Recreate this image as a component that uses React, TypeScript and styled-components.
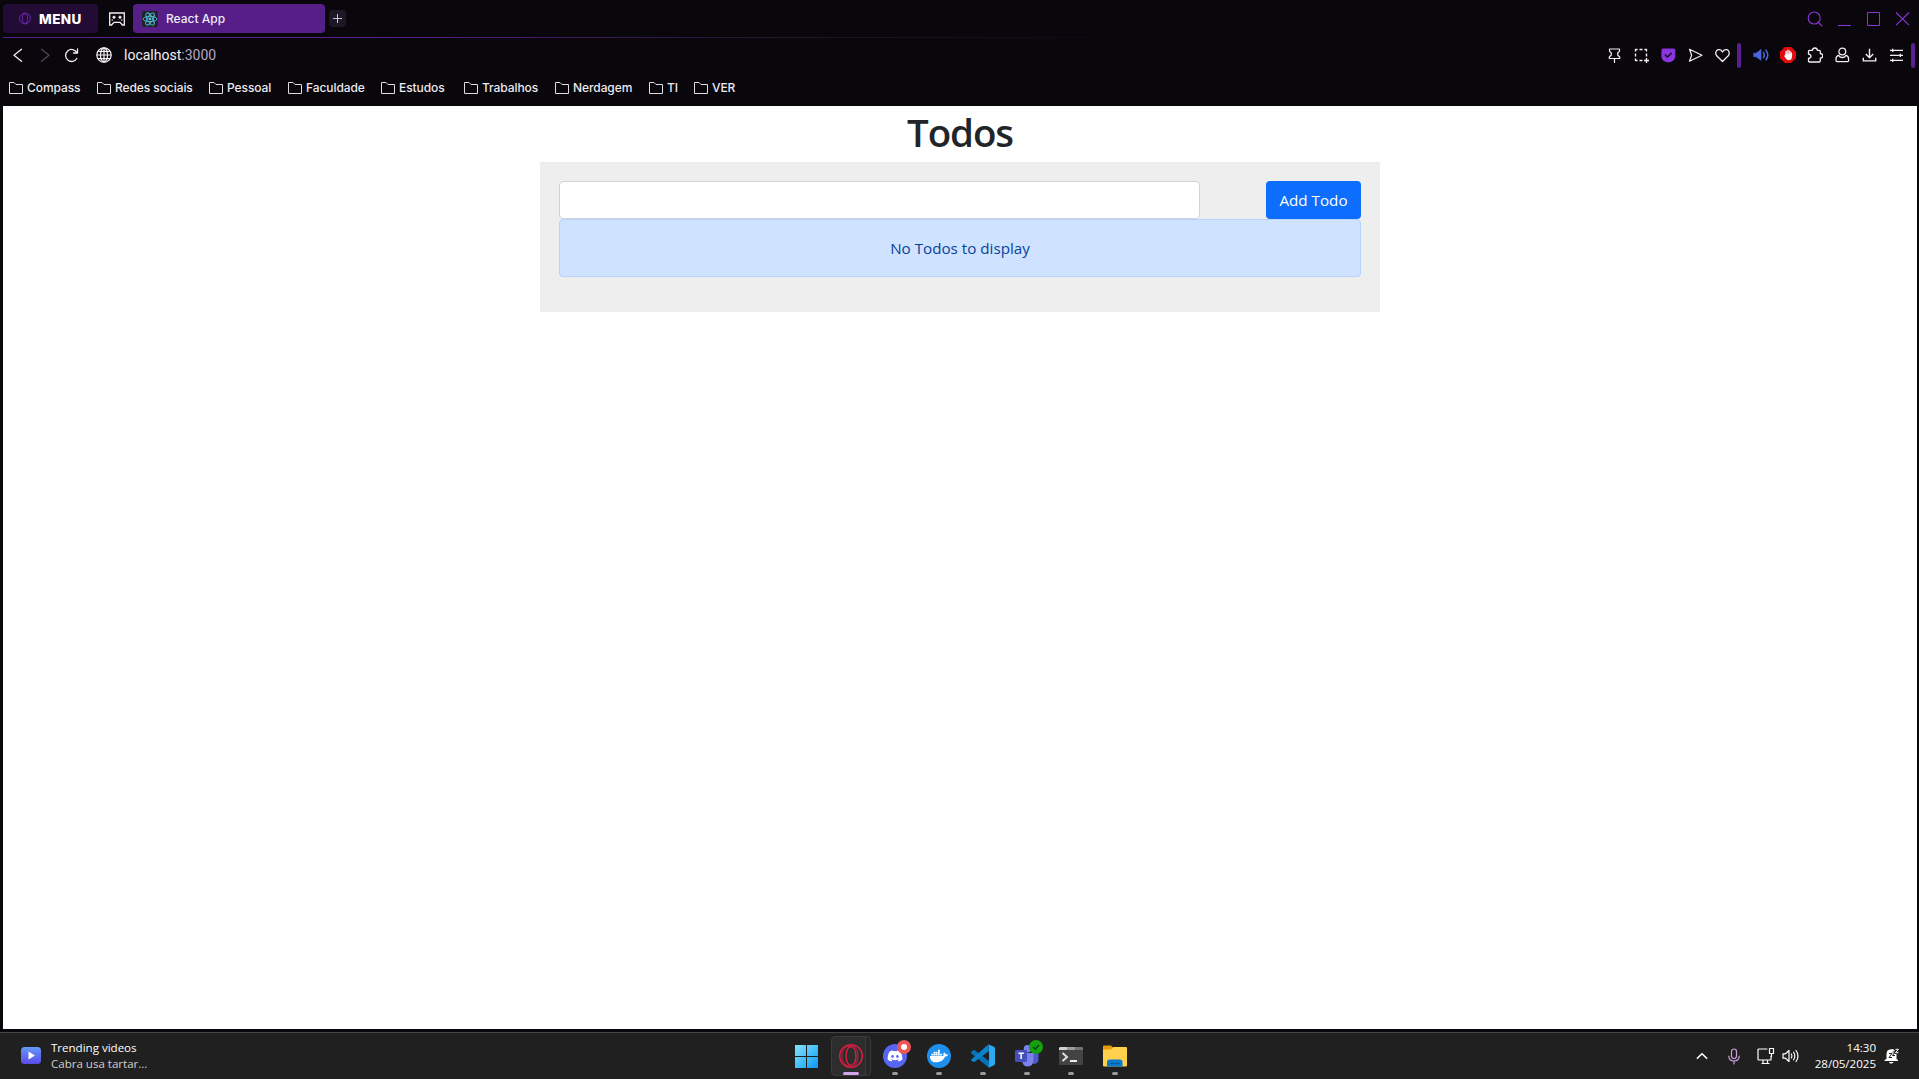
import React from "react";
import styled, { createGlobalStyle } from "styled-components";
import { FaDiscord, FaDocker } from "react-icons/fa";

const ui = `Inter, "Liberation Sans", sans-serif`;
const segoe = `"Open Sans", "Noto Sans", sans-serif`;

const Global = createGlobalStyle`
  * { box-sizing: border-box; }
  body { margin: 0; background: #09070c; overflow: hidden; }
  svg { display: block; flex: none; }
`;

const Screen = styled.div`
  display: flex;
  flex-direction: column;
  width: 1919px;
  height: 1079px;
  background: #09070c;
`;

/* ---------- browser chrome ---------- */
const TabBar = styled.header`
  display: flex;
  align-items: center;
  height: 37px;
  padding: 0 0 0 3px;
`;
const MenuButton = styled.button`
  display: flex;
  align-items: center;
  gap: 8px;
  width: 95px;
  height: 29px;
  padding: 0 0 0 16px;
  border: 0;
  border-radius: 4px;
  background: #220c36;
  color: #fff;
  font: 800 13.5px ${ui};
  letter-spacing: 0.4px;
`;
const GameCorner = styled.div`
  display: flex;
  justify-content: center;
  width: 35px;
  padding-left: 3px;
`;
const Tab = styled.div`
  display: flex;
  align-items: center;
  gap: 8px;
  width: 192px;
  height: 29px;
  padding-left: 9px;
  border-radius: 4px;
  background: #551f87;
  color: #efe8f5;
  font: 500 12px ${ui};
  letter-spacing: 0;
`;
const NewTab = styled.div`
  display: grid;
  place-items: center;
  width: 17px;
  height: 17px;
  margin-left: 4px;
  border-radius: 4px;
  background: #1e1727;
`;
const WindowControls = styled.div`
  display: grid;
  grid-template-columns: 28px 30px 29px 29px;
  justify-items: center;
  margin-left: auto;
  padding-right: 2px;
`;
const Accent = styled.div`
  height: 1px;
  margin-left: 3px;
  background: linear-gradient(90deg, #5a2090 0, #5a2090 360px, #24152f 760px, #0c0911 1100px);
`;
const NavBar = styled.nav`
  display: flex;
  align-items: center;
  height: 34px;
  padding-left: 6px;
`;
const NavSlot = styled.div<{ $w: number }>`
  display: grid;
  place-items: center;
  width: ${(p) => p.$w}px;
`;
const Address = styled.div`
  color: #f4f1f7;
  font: 400 14px/18px Roboto, ${ui};
  letter-spacing: 0;
  span { color: #b3a6c2; }
`;
const Extensions = styled.div`
  display: flex;
  align-items: center;
  margin-left: auto;
  padding-right: 4px;
`;
const ExtSlot = styled.div`
  display: grid;
  place-items: center;
  width: 27px;
  height: 25px;
`;
const Divider = styled.div<{ $before: number; $after: number }>`
  width: 4px;
  height: 25px;
  margin: 0 ${(p) => p.$after}px 0 ${(p) => p.$before}px;
  border-radius: 2px;
  background: #5a2090;
`;
const BookmarkBar = styled.div`
  display: flex;
  align-items: center;
  height: 34px;
  padding: 0 0 3px 9px;
`;
const Bookmark = styled.div<{ $w: number }>`
  display: flex;
  align-items: center;
  gap: 4px;
  width: ${(p) => p.$w}px;
  color: #ece9ef;
  font: 500 12px ${ui};
  letter-spacing: -0.08px;
  white-space: nowrap;
`;

/* ---------- page ---------- */
const Page = styled.main`
  flex: none;
  height: 923px;
  margin: 0 2px 0 3px;
  padding-top: 2px;
  background: #fff;
  font: 400 15.2px/24px ${segoe};
`;
const Title = styled.h1`
  margin: 0 0 6px;
  color: #212529;
  font: 600 38.5px/48px ${segoe};
  letter-spacing: -1.1px;
  text-align: center;
`;
const Card = styled.section`
  width: 840px;
  height: 150px;
  margin: 0 auto;
  padding: 19px;
  background: #eee;
`;
const Form = styled.div`
  display: flex;
  justify-content: space-between;
`;
const Input = styled.input`
  width: 641px;
  height: 38px;
  padding: 6px 12px;
  border: 1px solid #ced4da;
  border-radius: 4px;
  background: #fff;
`;
const AddButton = styled.button`
  width: 95px;
  height: 38px;
  padding: 0;
  border: 0;
  border-radius: 4px;
  background: #0d6efd;
  color: #fff;
  font: 400 15.2px/24px ${segoe};
`;
const Alert = styled.div`
  height: 58px;
  padding: 16px;
  border: 1px solid #b6d4fe;
  border-radius: 4px;
  background: #cfe2ff;
  color: #084298;
  text-align: center;
`;

/* ---------- taskbar ---------- */
const Taskbar = styled.footer`
  display: grid;
  grid-template-columns: 785px 1fr 1fr;
  height: 47px;
  margin-top: 3px;
  border-top: 1px solid #454545;
  background: #202020;
  color: #fff;
  font: 400 11.6px/16px ${segoe};
`;
const Widget = styled.div`
  display: flex;
  align-items: center;
  gap: 10px;
  padding: 0 0 0 21px;
`;
const WidgetText = styled.div`
  color: #fff;
  letter-spacing: -0.03px;
  div + div { color: #cfcfcf; }
`;
const Apps = styled.div`
  display: flex;
`;
const App44 = styled.div`
  position: relative;
  display: grid;
  place-items: center;
  width: 44px;
  height: 46px;
`;
const ActiveBack = styled.div`
  position: absolute;
  left: 2px;
  top: 3px;
  width: 40px;
  height: 40px;
  border: 1px solid #3b3b3b;
  border-radius: 4px;
  background: linear-gradient(90deg, #2d2d2d 0 33px, #3b3b3b 33px 34px, #272727 34px);
`;
const Glyph = styled.div`
  position: relative;
  display: grid;
  place-items: center;
  width: 24px;
  height: 24px;
`;
const Disc = styled(Glyph)<{ $bg: string }>`
  border-radius: 50%;
  background: ${(p) => p.$bg};
  color: #fff;
`;
const Badge = styled.div<{ $bg: string }>`
  position: absolute;
  top: -4px;
  right: -4px;
  display: grid;
  place-items: center;
  width: 14px;
  height: 14px;
  border-radius: 50%;
  background: ${(p) => p.$bg};
`;
const BadgeDot = styled.div`
  width: 6px;
  height: 6px;
  border-radius: 50%;
  background: #fff;
`;
const Running = styled.div<{ $active?: boolean }>`
  position: absolute;
  left: ${(p) => (p.$active ? 14 : 19)}px;
  bottom: 4px;
  width: ${(p) => (p.$active ? 16 : 6)}px;
  height: 3px;
  border-radius: 2px;
  background: ${(p) => (p.$active ? "#d3a3ea" : "#9a9a9a")};
`;
const Tray = styled.div`
  display: flex;
  align-items: center;
  justify-content: flex-end;
  padding-right: 19px;
`;
const TraySlot = styled.div<{ $w: number }>`
  display: grid;
  place-items: center;
  width: ${(p) => p.$w}px;
`;
const Clock = styled.div`
  width: 76px;
  margin-right: 8px;
  text-align: right;
  letter-spacing: -0.03px;
`;

const line = { fill: "none", stroke: "currentColor", strokeLinecap: "round", strokeLinejoin: "round" } as const;

const Folder = () => (
  <svg width="14" height="14" viewBox="0 0 14 14" fill="none" stroke="#dedbe2" strokeWidth="1">
    <path d="M.5 12.5V1.5H5L7 3.5H13.5V12.5Z" />
  </svg>
);

const ReactMark = () => (
  <svg width="16" height="16" viewBox="0 0 16 16" fill="none" stroke="#53c1de" strokeWidth=".9">
    <rect width="16" height="16" rx="2" fill="#20232a" stroke="none" />
    {[30, 90, 150].map((a) => (
      <ellipse key={a} cx="8" cy="8" rx="6.9" ry="2.7" transform={`rotate(${a - 30} 8 8)`} />
    ))}
    <circle cx="8" cy="8" r="1.4" fill="#53c1de" stroke="none" />
  </svg>
);

const ext = (key: string) => {
  const s = { width: 16, height: 16, viewBox: "0 0 16 16", color: "#f1eef4", strokeWidth: 1.2, ...line };
  switch (key) {
    case "pin":
      return <svg {...s}><path d="M3.5 2H13.5V4.2L11.7 6V8L13.7 10V11.5H3.3V10L5.3 8V6L3.5 4.2ZM8.5 11.5V15.5" /></svg>;
    case "snap":
      return (
        <svg {...s} strokeLinecap="butt" strokeWidth="1.4">
          <path d="M2.5 4.5V2.5H4.5M6.5 2.5H9.5M11.5 2.5H13.5V4.5M13.5 6.5V9.5M2.5 6.5V9.5M2.5 11.5V13.5H4.5M6.5 13.5H9.5M11 13.5H16M13.5 11V16" />
        </svg>
      );
    case "shield":
      return (
        <svg {...s}>
          <path d="M3 2H13.5Q14.7 2 14.7 3.2V9.5Q14.2 14 8.3 15Q2.4 14 2 9.5V3.2Q2 2 3 2Z" fill="#8a35df" stroke="#8a35df" />
          <path d="M5.3 8L7.5 10L11.3 6.2" stroke="#160b22" strokeWidth="1.5" />
        </svg>
      );
    case "send":
      return <svg {...s}><path d="M2.5 2.3L15 8.3L2.5 14.2L4.6 8.3Z" /></svg>;
    case "heart":
      return <svg {...s} strokeWidth="1.3"><path d="M8.5 14.5L2.7 8.7C1.2 7 1.5 3.5 4 2.7C6 2.2 7.8 3.3 8.5 5C9.2 3.3 11 2.2 13 2.7C15.5 3.5 15.8 7 14.3 8.7Z" /></svg>;
    case "sound":
      return (
        <svg {...s} color="#4a67dc" strokeWidth="1.5">
          <path d="M.8 6.2H3L8 2.5V13.3L3 9.7H.8Z" fill="#4a67dc" strokeWidth=".6" />
          <path d="M10.5 5.5Q12 8 10.5 10.5M13 3.2Q16.6 8 13 12.8" />
        </svg>
      );
    case "hand":
      return (
        <svg {...s} strokeWidth="1.7">
          <path d="M4.8 0H11.2L16 4.8V11.2L11.2 16H4.8L0 11.2V4.8Z" fill="#e20a0d" stroke="none" />
          <path d="M6.1 8V4.4M8 7.5V3.3M9.8 7.5V4.2M11.4 9V6" stroke="#fff" strokeWidth="1.4" />
          <path d="M5.4 7H12V10Q11.5 13.3 8.8 13.3Q7 13.3 5.8 11.5L4 8.8Q4.5 7.9 5.4 8.8Z" fill="#fff" stroke="none" />
        </svg>
      );
    case "puzzle":
      return <svg {...s} strokeWidth="1.3"><path d="M1.5 4.3Q1.5 3.3 2.5 3.3H5.5Q5.5 1 7.9 1T10.3 3.3H12.3Q13.3 3.3 13.3 4.3V6.5Q15.8 6.8 15.8 8.8T13.3 11.2V14Q13.3 15 12.3 15H2.5Q1.5 15 1.5 14V11.5Q4 11 4 9.3T1.5 7.2Z" /></svg>;
    case "person":
      return <svg {...s} strokeWidth="1.3"><circle cx="8.3" cy="4.5" r="3.4" /><path d="M4.6 8.3Q2 9 2 12V13.5Q2 14.6 3.1 14.6H13.5Q14.6 14.6 14.6 13.5V12Q14.6 9 12 8.3Q10.6 10.5 8.3 10.5T4.6 8.3Z" /></svg>;
    case "download":
      return <svg {...s} strokeLinecap="butt" strokeWidth="1.4"><path d="M8.5 1.8V10.5M4.8 7L8.5 10.7L12.2 7M2.3 10.7V13.9H14.7V10.7" /></svg>;
    default:
      return <svg {...s} strokeLinecap="butt" strokeWidth="1.3"><path d="M2 3.3H15M2 8.3H15M2 13.3H15M4.7 1.7V4.9M12.3 6.7V9.9M4.7 11.7V14.9" /></svg>;
  }
};

const bookmarks: [string, number][] = [
  ["Compass", 88], ["Redes sociais", 112], ["Pessoal", 79], ["Faculdade", 93], ["Estudos", 83],
  ["Trabalhos", 91], ["Nerdagem", 94], ["TI", 45], ["VER", 50],
];

const WindowsLogo = () => (
  <svg width="24" height="24" viewBox="0 0 24 24">
    <defs>
      <linearGradient id="win" x1="0" y1="0" x2="24" y2="24" gradientUnits="userSpaceOnUse">
        <stop stopColor="#8be2fb" /><stop offset=".55" stopColor="#40bdf8" /><stop offset="1" stopColor="#0b93f5" />
      </linearGradient>
    </defs>
    <path d="M0 1H11V12H0ZM12 1H23V12H12ZM0 13H11V24H0ZM12 13H23V24H12Z" fill="url(#win)" />
  </svg>
);
const OperaLogo = () => (
  <svg width="24" height="24" viewBox="1 1 24 24" fill="none" stroke="#e31c45">
    <circle cx="13" cy="13" r="11.3" strokeWidth="1.4" />
    <ellipse cx="13" cy="13" rx="5" ry="9.5" strokeWidth="1.3" />
    <path d="M13 3.5C7.5 1.5 3.8 8 3.8 13S7.5 24.5 13 22.5M16 2.5Q20 6 20 13T16 23.5" strokeWidth="1" opacity=".8" />
  </svg>
);
const VsCodeLogo = () => (
  <svg width="24" height="24" viewBox="0 0 24 24">
    <path d="M0 8.2L2.2 6.2Q3 5.7 3.8 6.3L18 17V23.8L1 10Q-.4 9 0 8.2Z" fill="#0672b7" />
    <path d="M0 15.8L17.5 .3L18 7L3.8 17.7Q3 18.3 2.2 17.8L.4 16.4Z" fill="#0b82ca" />
    <path d="M17.2.2L23 2.8Q24 3.3 24 4.4V19.6Q24 20.7 23 21.2L17.2 23.9Q18 23.2 18 22V2Q18 .9 17.2.2Z" fill="#2aa8f2" />
  </svg>
);
const TeamsLogo = () => (
  <svg width="24" height="24" viewBox="0 0 24 24">
    <circle cx="12.5" cy="4.7" r="3.8" fill="#7b83eb" />
    <circle cx="20" cy="6" r="2.6" fill="#5059c9" />
    <path d="M17 9H23.5V16Q23 20 18 20Z" fill="#5059c9" />
    <path d="M7 9H18.5V16Q18 22.5 12.7 22.5Q8 22.5 7 17Z" fill="#7b83eb" />
    <rect y="6" width="12" height="12" rx="1" fill="#4550bd" />
    <path d="M3.5 9.2H8.8M6.15 9.2V15" stroke="#fff" strokeWidth="1.5" />
  </svg>
);
const TerminalLogo = () => (
  <svg width="24" height="20" viewBox="0 0 24 20">
    <rect y="1" width="24" height="18" rx="1" fill="#434343" />
    <path d="M1 1H8V4H0V2Z" fill="#d0d0d0" /><path d="M8 1H16V4H8Z" fill="#9b9b9b" /><path d="M16 1H23L24 2V4H16Z" fill="#747474" />
    <path d="M3.5 7L8 11L3.5 15" fill="none" stroke="#dcdcdc" strokeWidth="2" /><path d="M11 15H18" stroke="#fff" strokeWidth="1.8" />
  </svg>
);
const ExplorerLogo = () => (
  <svg width="24" height="24" viewBox="0 0 24 24">
    <path d="M0 8V2.5Q0 1.5 1 1.5H8L10.5 4H23Q24 4 24 5V8Z" fill="#e49b0b" />
    <path d="M0 5.5H8L10.5 3H23Q24 3 24 4V21.5Q24 22.5 23 22.5H1Q0 22.5 0 21.5Z" fill="#ffd04b" />
    <path d="M4 22.5V18Q4 15.5 6.5 15.5H17Q19.5 15.5 19.5 18V22.5Z" fill="#087bd0" />
    <path d="M7 19.5H16.5" stroke="#075b9c" strokeWidth="1.3" />
  </svg>
);

export default function App() {
  return (
    <Screen>
      <Global />
      <TabBar>
        <MenuButton>
          <svg width="12" height="13" viewBox="0 0 12 13" fill="none" stroke="#6c25ad">
            <circle cx="6" cy="6.5" r="5.4" /><ellipse cx="6" cy="6.5" rx="2.6" ry="4.9" />
          </svg>
          MENU
        </MenuButton>
        <GameCorner>
          <svg width="18" height="14" viewBox="0 0 18 14" fill="none" stroke="#f3f0f5" strokeWidth="1.3">
            <path d="M1.7 1H16.3V13H14.5L12 10.3H6L3.5 13H1.7Z" />
            <path d="M4.5 5.2H7.5M10.5 5.2H13.5M6 3.7V6.7M12 3.7V6.7" strokeWidth="1.5" />
            <path d="M3.5 8H5M13 8H14.5" strokeWidth="1" />
          </svg>
        </GameCorner>
        <Tab><ReactMark />React App</Tab>
        <NewTab>
          <svg width="9" height="9" viewBox="0 0 9 9" stroke="#c9c3d0"><path d="M4.5 0V9M0 4.5H9" /></svg>
        </NewTab>
        <WindowControls>
          <svg width="16" height="16" viewBox="0 0 16 16" {...line} color="#8a35d6" strokeWidth="1.1"><circle cx="7.2" cy="7" r="6" /><path d="M11.5 11.5L15 15" /></svg>
          <svg width="15" height="16" viewBox="0 0 15 16" stroke="#8a35d6"><path d="M1 14.5H14" /></svg>
          <svg width="15" height="16" viewBox="0 0 15 16" fill="none" stroke="#8a35d6"><path d="M1.5 1.5H13.5V14.5H1.5Z" /></svg>
          <svg width="15" height="16" viewBox="0 0 15 16" stroke="#8a35d6"><path d="M1 1.5L14 14.2M14 1.5L1 14.2" strokeWidth="1.1" /></svg>
        </WindowControls>
      </TabBar>
      <Accent />
      <NavBar>
        <NavSlot $w={24}><svg width="10" height="14" viewBox="0 0 10 14" {...line} color="#f1eef4" strokeWidth="1.3"><path d="M8.5 1.3L1 7.3L8.5 13.3" /></svg></NavSlot>
        <NavSlot $w={29}><svg width="10" height="14" viewBox="0 0 10 14" {...line} color="#504a57" strokeWidth="1.2"><path d="M1.5 1.3L9 7.3L1.5 13.3" /></svg></NavSlot>
        <NavSlot $w={24}>
          <svg width="15" height="15" viewBox="0 0 15 15" {...line} color="#f1eef4" strokeWidth="1.3"><path d="M12.8 10.5A6 6 0 1 1 12.7 4.3M13.5 1V5H9.5" /></svg>
        </NavSlot>
        <NavSlot $w={41}>
          <svg width="16" height="16" viewBox="0 0 16 16" {...line} color="#f1eef4" strokeWidth="1.2">
            <circle cx="8" cy="8" r="7.2" /><ellipse cx="8" cy="8" rx="3.5" ry="7.2" /><path d="M8 1V15M1 8H15M2 4.3H14M2 11.7H14" />
          </svg>
        </NavSlot>
        <Address>localhost<span>:3000</span></Address>
        <Extensions>
          {["pin", "snap", "shield", "send", "heart"].map((k) => <ExtSlot key={k}>{ext(k)}</ExtSlot>)}
          <Divider $before={2} $after={6} />
          {["sound", "hand", "puzzle", "person", "download", "sliders"].map((k) => <ExtSlot key={k}>{ext(k)}</ExtSlot>)}
          <Divider $before={2} $after={0} />
        </Extensions>
      </NavBar>
      <BookmarkBar>
        {bookmarks.map(([name, w]) => <Bookmark key={name} $w={w}><Folder />{name}</Bookmark>)}
      </BookmarkBar>

      <Page>
        <Title>Todos</Title>
        <Card>
          <Form><Input /><AddButton>Add Todo</AddButton></Form>
          <Alert>No Todos to display</Alert>
        </Card>
      </Page>

      <Taskbar>
        <Widget>
          <svg width="20" height="18" viewBox="0 0 20 18">
            <defs><linearGradient id="vid" x2="0" y2="1"><stop stopColor="#6599f8" /><stop offset="1" stopColor="#594be7" /></linearGradient></defs>
            <rect width="20" height="17" rx="3.5" fill="url(#vid)" /><path d="M7.5 4.5V12.5L14 8.5Z" fill="#fff" />
          </svg>
          <WidgetText><div>Trending videos</div><div>Cabra usa tartar...</div></WidgetText>
        </Widget>
        <Apps>
          <App44><WindowsLogo /></App44>
          <App44><ActiveBack /><Glyph><OperaLogo /></Glyph><Running $active /></App44>
          <App44><Disc $bg="#5865f2"><FaDiscord size={16} /><Badge $bg="#ee5555"><BadgeDot /></Badge></Disc><Running /></App44>
          <App44><Disc $bg="#1d90ee"><FaDocker size={18} /></Disc><Running /></App44>
          <App44><Glyph><VsCodeLogo /></Glyph><Running /></App44>
          <App44>
            <Glyph><TeamsLogo />
              <Badge $bg="#13a10e"><svg width="8" height="8" viewBox="0 0 8 8" fill="none" stroke="#073d06" strokeWidth="1.3"><path d="M1 4L3.2 6L7 2" /></svg></Badge>
            </Glyph><Running />
          </App44>
          <App44><Glyph><TerminalLogo /></Glyph><Running /></App44>
          <App44><Glyph><ExplorerLogo /></Glyph><Running /></App44>
        </Apps>
        <Tray>
          <TraySlot $w={32}><svg width="12" height="8" viewBox="0 0 12 8" {...line} strokeWidth="1.6"><path d="M1.3 6.3L6 1.7L10.7 6.3" /></svg></TraySlot>
          <TraySlot $w={32}>
            <svg width="14" height="17" viewBox="0 0 14 17" {...line} color="#c9a1dc" strokeWidth="1.2"><rect x="4.5" y="1" width="5" height="9.5" rx="2.5" /><path d="M1.8 8Q1.8 13 7 13T12.2 8M7 13V16" /></svg>
          </TraySlot>
          <TraySlot $w={32}>
            <svg width="18" height="18" viewBox="0 0 18 18" {...line} strokeWidth="1.2"><path d="M10 2H2Q1 2 1 3V12Q1 13 2 13H14V9M5 16.5H12M6 13V16M10.5 13V16M12.5 1.5H16.5V6.5H12.5ZM14.5 6.5V9.5" /></svg>
          </TraySlot>
          <TraySlot $w={18}>
            <svg width="18" height="16" viewBox="0 0 18 16" {...line} strokeWidth="1.2"><path d="M1 5.8H3.5L7 2.5V13.5L3.5 10.2H1ZM9.3 6Q10.5 8 9.3 10M11.6 4.2Q14 8 11.6 11.8M14 2.5Q18 8 14 13.5" /></svg>
          </TraySlot>
          <Clock><div>14:30</div><div>28/05/2025</div></Clock>
          <svg width="16" height="16" viewBox="0 0 16 16">
            <path d="M2.5 11V6Q2.5 1.5 7 1.2H9Q13 2 12.5 7V11L14 12V13H.5V12ZM5 14H9.5Q9 15.5 7.2 15.5T5 14Z" fill="#fff" />
            <path d="M5 5.5H8L5 9.5H8M8.5 4H11L8.5 7.5H11" fill="none" stroke="#202020" strokeWidth="1" />
            <path d="M10.5 0H15V6H10.5Z" fill="#202020" />
            <path d="M11.5 1.3H14.5L11.5 4.7H14.5" fill="none" stroke="#fff" />
          </svg>
        </Tray>
      </Taskbar>
    </Screen>
  );
}
